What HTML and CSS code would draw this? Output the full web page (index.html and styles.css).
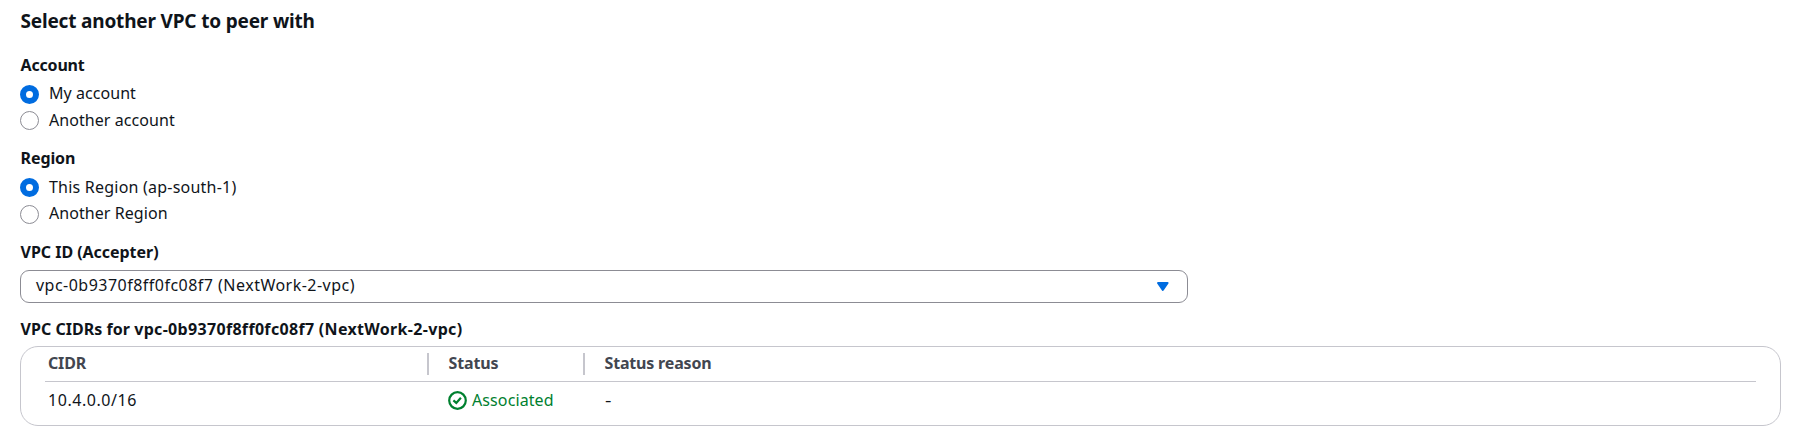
FILE: index.html
```html
<!DOCTYPE html>
<html lang="en">
<head>
<meta charset="utf-8">
<title>Create peering connection</title>
<link rel="stylesheet" href="styles.css">
</head>
<body>
<main class="panel">
  <h2 class="title"><span class="t-title">Select another VPC to peer with</span></h2>
  <section class="group">
    <h3 class="label"><span class="t-account">Account</span></h3>
    <div class="option"><span class="radio checked"></span><span class="t-mine">My account</span></div>
    <div class="option second"><span class="radio"></span><span class="t-other">Another account</span></div>
  </section>
  <section class="group region">
    <h3 class="label"><span class="t-region">Region</span></h3>
    <div class="option"><span class="radio checked"></span><span class="t-this">This Region (ap-south-1)</span></div>
    <div class="option second"><span class="radio"></span><span class="t-another">Another Region</span></div>
  </section>
  <section class="field">
    <h3 class="label"><span class="t-vpc">VPC ID (Accepter)</span></h3>
    <div class="select">
      <span class="t-select">vpc-0b9370f8ff0fc08f7 (NextWork-2-vpc)</span>
      <svg class="caret" width="14" height="12" viewBox="0 0 14 12"><path d="M2 2h9.6L6.8 9z" fill="#006ce0" stroke="#006ce0" stroke-width="2" stroke-linejoin="round"/></svg>
    </div>
  </section>
  <section class="cidrs">
    <h3 class="label"><span class="t-prefix">VPC CIDRs for </span><span class="t-cidrs">vpc-0b9370f8ff0fc08f7 (NextWork-2-vpc)</span></h3>
    <div class="table">
      <div class="row head">
        <div class="cell"><span class="t-cidr">CIDR</span></div>
        <div class="cell split"><span class="t-status">Status</span></div>
        <div class="cell split"><span class="t-reason">Status reason</span></div>
      </div>
      <div class="row">
        <div class="cell"><span class="t-ip">10.4.0.0/16</span></div>
        <div class="cell status">
          <svg width="19" height="19" viewBox="0 0 19 19" fill="none" stroke="#00802f" stroke-width="2.2"><circle cx="9.5" cy="9.5" r="8.3"/><path d="M5.4 9.4l2.9 2.5 4.6-5.2"/></svg>
          <span class="t-assoc">Associated</span>
        </div>
        <div class="cell dash"><span class="t-dash">-</span></div>
      </div>
    </div>
  </section>
</main>
</body>
</html>
```
FILE: styles.css
```css
* { box-sizing: border-box; }
body {
  margin: 0;
  background: #fff;
  color: #0f141a;
  font: 16px/24px "Noto Sans", "Open Sans", sans-serif;
}
h2, h3 { margin: 0; font-weight: 700; }
span { white-space: nowrap; }
.panel { padding: 9px 17px 0 20px; }
.title { font-size: 19px; line-height: 24px; padding-left: 0.5px; }
.label { font-size: 16px; line-height: 24px; padding-left: 0.6px; }
.group { padding-top: 20px; height: 94px; }
.option { display: flex; gap: 10px; height: 24px; margin-top: 4px; }
.option.second { margin-top: 3px; }
.radio {
  width: 19px;
  height: 19px;
  margin-top: 4px;
  border: 1px solid #8c8c94;
  border-radius: 50%;
}
.second .radio { margin-top: 3px; }
.radio.checked { border: 6px solid #006ce0; }
.group.region { padding-top: 19px; height: 95px; }
.region .option { margin-top: 5px; }
.region .option.second { margin-top: 2px; }
.region .radio { margin-top: 3px; }
.region .second .radio { margin-top: 4px; }
.field { padding-top: 18px; }
.select {
  display: flex;
  justify-content: space-between;
  width: 1168px;
  height: 33px;
  margin-top: 6px;
  padding: 2px 17px 0 15px;
  border: 1px solid #8c8c94;
  border-radius: 9px;
}
.caret { margin-top: 8px; }
.cidrs { padding-top: 14px; }
.table {
  height: 80px;
  margin-top: 5px;
  padding: 4px 24px 0;
  border: 1px solid #c6c6cd;
  border-radius: 18px;
}
.row {
  display: grid;
  grid-template-columns: 382px 156px 1fr;
  height: 44px;
  padding-top: 6px;
}
.row.head {
  height: 31px;
  padding-top: 0;
  border-bottom: 1px solid #c6c6cd;
  color: #424650;
  font-weight: 700;
}
.cell { padding-left: 3px; }
.row .cell + .cell { padding-left: 21px; }
.split {
  height: 22px;
  margin-top: 2px;
  border-left: 2px solid #c6c6cd;
  line-height: 20px;
}
.row .cell + .split { padding-left: 19.5px; }
.row .cell + .dash { padding-left: 22px; }
.status { display: flex; gap: 5px; color: #00802f; }
.status svg { margin-top: 3px; }

/* Tracking per text run */
.t-title { letter-spacing: -0.18px; }
.t-account { letter-spacing: -0.2px; }
.t-region { letter-spacing: -0.12px; }
.t-mine { letter-spacing: 0.05px; }
.t-other, .t-another { letter-spacing: 0.06px; }
.t-this { letter-spacing: 0.22px; }
.t-vpc { letter-spacing: -0.04px; }
.t-select { letter-spacing: 0.48px; }
.t-prefix { letter-spacing: 0.03px; white-space: pre; }
.t-cidrs { letter-spacing: 0.32px; }
.t-cidr, .t-status { letter-spacing: -0.15px; }
.t-reason { letter-spacing: -0.18px; }
.t-ip { letter-spacing: 0.55px; }
.t-assoc { letter-spacing: 0.1px; }
.t-dash { display: inline-block; transform: scaleX(1.25); transform-origin: left; }
```
